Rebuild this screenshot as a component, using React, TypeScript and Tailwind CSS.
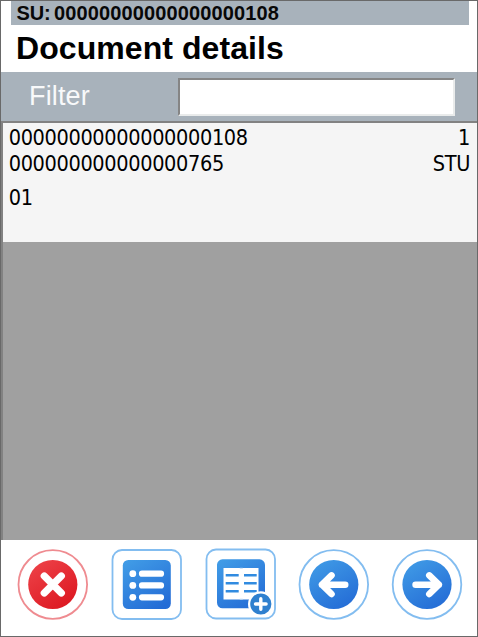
import type { ReactNode } from "react";

const blue = "url(#blue)";

function Icon({ label, children }: { label: string; children: ReactNode }) {
  return (
    <button aria-label={label} className="h-[72px] w-[72px] shrink-0">
      <svg viewBox="0 0 72 72" className="block h-[72px] w-[72px]" fill="none">
        <defs>
          <linearGradient id="blue" x1="0.15" y1="0" x2="0.75" y2="1">
            <stop offset="0" stopColor="#409be6" />
            <stop offset="1" stopColor="#246cd6" />
          </linearGradient>
          <linearGradient id="red" x1="0.1" y1="0" x2="0.8" y2="1">
            <stop offset="0" stopColor="#ee4349" />
            <stop offset="1" stopColor="#dc1720" />
          </linearGradient>
        </defs>
        {children}
      </svg>
    </button>
  );
}

function Row({ left, right, className }: { left: string; right?: string; className: string }) {
  return (
    <div className={`flex justify-between ${className}`}>
      <span>{left}</span>
      <span>{right}</span>
    </div>
  );
}

export default function App() {
  return (
    <div className="flex h-[637px] w-[478px] flex-col overflow-hidden border border-[#696969] bg-white font-['Liberation_Sans',Arial,sans-serif] whitespace-nowrap text-black">
      <div className="mr-2 ml-[10px] flex h-[24px] shrink-0 items-center bg-[#a8b2bb] pl-[5.5px] text-[20px] leading-none font-bold text-[#080808]">
        <span className="w-[37.5px] tracking-[-0.2px]">SU:</span>
        <span className="tracking-[0.13px]">00000000000000000108</span>
      </div>
      <h1 className="h-[47px] shrink-0 pt-[6px] pl-[15px] text-[32px] leading-[34px] font-bold tracking-[0.07px]">
        Document details
      </h1>
      <div className="flex h-[49px] shrink-0 items-start bg-[#a8b2bb] pt-[6px] pl-[28px]">
        <label htmlFor="filter" className="w-[149px] pt-px text-[27px] leading-[34px] tracking-[0.15px] text-[#f8f9fa]">
          Filter
        </label>
        <input
          id="filter"
          className="h-[38px] w-[277px] border-t-2 border-r-2 border-b-2 border-l-2 border-t-[#858585] border-r-[#e9ebeb] border-b-[#e9ebeb] border-l-[#858585] bg-white outline-none"
        />
      </div>
      <main className="h-[419px] shrink-0 border-t-2 border-l-2 border-[#828282] bg-[#a0a0a0]">
        <div className="h-[119px] bg-[#f5f5f5] pt-[2px] pr-[7px] pl-[5.7px] font-['DejaVu_Sans_Condensed','DejaVu_Sans',sans-serif] text-[21.5px] leading-[26px] tracking-[-0.35px] [font-stretch:condensed]">
          <Row left="00000000000000000108" right="1" className="h-[26px]" />
          <Row left="000000000000000765" right="STU" className="h-[34px]" />
          <Row left="01" className="h-[26px]" />
        </div>
      </main>
      <footer className="flex min-h-0 flex-1 items-start justify-between pt-[8px] pr-[14px] pl-[15px]">
        <Icon label="Cancel">
          <circle cx="36.8" cy="36.5" r="34.3" stroke="#ef8b90" strokeWidth="1.8" />
          <circle cx="36.8" cy="36.5" r="24.6" fill="url(#red)" />
          <path d="m28.3 28 17 17m0-17-17 17" stroke="white" strokeWidth="7.3" strokeLinecap="round" />
        </Icon>
        <Icon label="List">
          <rect x="2.5" y="2" width="68.5" height="69" rx="9.5" stroke="#83bdf0" strokeWidth="1.8" />
          <rect x="12.8" y="12" width="48" height="49" rx="5.5" fill={blue} />
          <path d="M32 25.7h19M32 37.4h19M32 49.3h19" stroke="white" strokeWidth="6.2" strokeLinecap="round" />
          <g fill="white">
            <circle cx="22.8" cy="25.7" r="3.4" />
            <circle cx="22.8" cy="37.4" r="3.4" />
            <circle cx="22.8" cy="49.3" r="3.4" />
          </g>
        </Icon>
        <Icon label="Add row">
          <rect x="2.5" y="1.5" width="68.5" height="69" rx="9.5" stroke="#83bdf0" strokeWidth="1.8" />
          <rect x="13" y="11.3" width="48" height="49" rx="5.5" fill={blue} />
          <path d="M19.5 20h35v31.5h-35z" fill="white" />
          <path d="M21.7 27.3h13M40 27.3h12.7M21.7 35.2h13M40 35.2h12.7M21.7 43.2h13M40 43.2h12.7" stroke="#318be0" strokeWidth="2.4" />
          <path d="M35.8 20.3h3M35.8 51.2h3" stroke="#c3def5" strokeWidth="1" />
          <circle cx="56.8" cy="56" r="11.7" fill="#2f80cf" stroke="white" strokeWidth="2.2" />
          <path d="M56.8 50.7v10.6M51.5 56h10.6" stroke="white" strokeWidth="3.4" strokeLinecap="round" />
        </Icon>
        <Icon label="Previous">
          <circle cx="36.8" cy="36.5" r="34.3" stroke="#83bdf0" strokeWidth="1.8" />
          <circle cx="36.8" cy="36.5" r="24.6" fill={blue} />
          <path d="M48.2 36.7H25m9.5-9.3L25 36.7l9.5 9.3" stroke="white" strokeWidth="6.6" strokeLinecap="round" strokeLinejoin="round" />
        </Icon>
        <Icon label="Next">
          <circle cx="36" cy="36.5" r="34.3" stroke="#83bdf0" strokeWidth="1.8" />
          <circle cx="36" cy="36.5" r="24.6" fill={blue} />
          <path d="M24.6 36.7h23.2m-9.5-9.3 9.5 9.3-9.5 9.3" stroke="white" strokeWidth="6.6" strokeLinecap="round" strokeLinejoin="round" />
        </Icon>
      </footer>
    </div>
  );
}
